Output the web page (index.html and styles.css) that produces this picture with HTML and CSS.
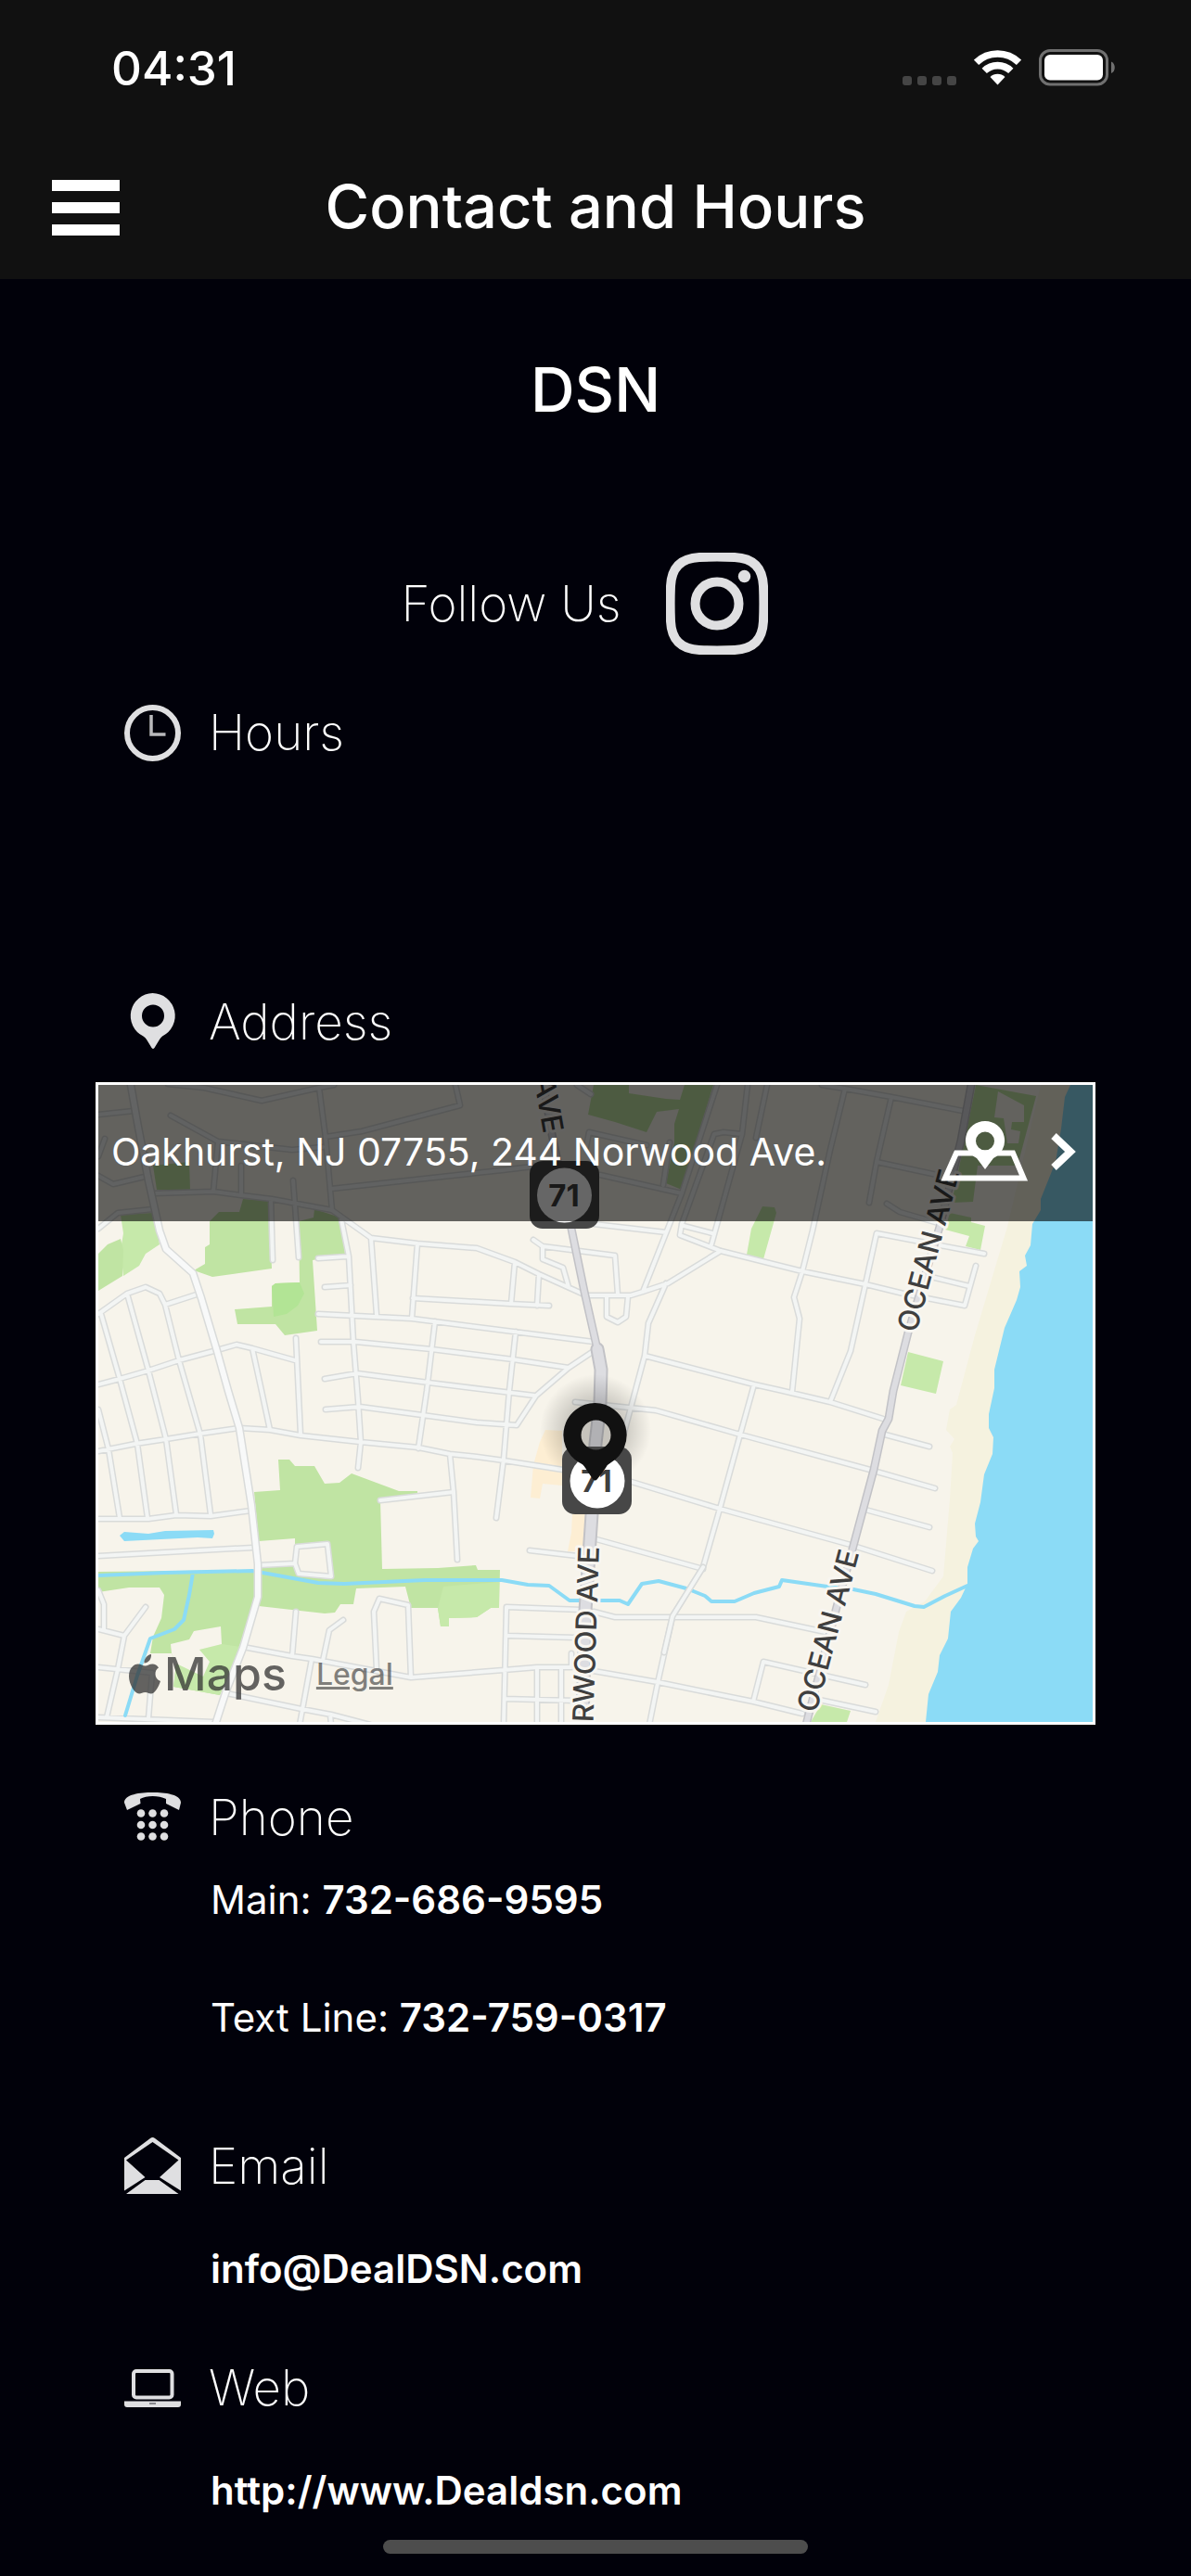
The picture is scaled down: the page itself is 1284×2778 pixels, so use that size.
FILE: index.html
```html
<!DOCTYPE html>
<html lang="en">
<head>
<meta charset="utf-8">
<meta name="viewport" content="width=device-width, initial-scale=1">
<title>Contact and Hours</title>
<link rel="stylesheet" href="styles.css">
</head>
<body>
<header class="top">
  <div class="status">
    <time class="status-time">04:31</time>
    <div class="status-icons">
      <svg width="58" height="38" viewBox="0 0 58 38" fill="#454545" aria-hidden="true">
        <rect x="0" y="28" width="10" height="10" rx="3"/><rect x="16" y="28" width="10" height="10" rx="3"/><rect x="32" y="28" width="10" height="10" rx="3"/><rect x="48" y="28" width="10" height="10" rx="3"/>
      </svg>
      <svg width="51" height="38" viewBox="0 0 51 38" aria-hidden="true">
        <g fill="none" stroke="#fff" stroke-width="7.6"><path d="M2.5 13.4A33 33 0 0 1 48.5 13.4"/><path d="M11.2 22.4A20.5 20.5 0 0 1 39.8 22.4"/></g>
        <path d="M25.5 37.500L17.500 29A11.500 11.500 0 0 1 33.500 29Z" fill="#fff"/>
      </svg>
      <svg width="82" height="40" viewBox="0 0 82 40" aria-hidden="true">
        <rect x="1.500" y="1.500" width="72" height="36.500" rx="10.500" fill="none" stroke="#707070" stroke-width="3"/>
        <rect x="6" y="6" width="63" height="27.500" rx="6" fill="#fff"/>
        <path d="M78 13.500C83 15 83 24.500 78 26Z" fill="#707070"/>
      </svg>
    </div>
  </div>
  <div class="titlebar">
    <button class="menu" type="button" aria-label="Menu"><span></span><span></span><span></span></button>
    <h1 class="title">Contact and Hours</h1>
  </div>
</header>

<main class="page">
  <h2 class="name">DSN</h2>
  <div class="follow">
    <span class="thin">Follow Us</span>
    <a href="#instagram" class="insta" aria-label="Instagram">
      <svg width="110" height="110" viewBox="0 0 110 110" fill="none" stroke="#dfdfe1" stroke-width="10">
        <path d="M36 5C48 4.500 62 4.500 74 5C94 6 104 16 105 36C105.500 48 105.500 62 105 74C104 94 94 104 74 105C62 105.500 48 105.500 36 105C16 104 6 94 5 74C4.500 62 4.500 48 5 36C6 16 16 6 36 5Z"/>
        <circle cx="55" cy="55" r="23.500"/><circle cx="84.500" cy="25.500" r="6.700" fill="#dfdfe1" stroke="none"/>
      </svg>
    </a>
  </div>

  <section class="block hours">
    <div class="head">
      <svg class="icon" viewBox="0 0 64 64" fill="none" aria-hidden="true"><circle cx="31.500" cy="33.500" r="27.500" stroke="#dfdfe1" stroke-width="6"/><path d="M30 14V35H45.500" stroke="#b9b9bc" stroke-width="3.500"/></svg>
      <h3 class="thin">Hours</h3>
    </div>
  </section>

  <section class="block address">
    <div class="head">
      <svg class="icon" viewBox="0 0 64 64" fill="#dfdfe1" aria-hidden="true"><path fill-rule="evenodd" d="M31.500 2A24.500 24.500 0 0 1 42 48.500Q40 50 39 52L33.500 61Q32 63 30.500 61L25 52Q24 50 21.500 48.500A24.500 24.500 0 0 1 31.500 2ZM32 14.500A12 12 0 1 0 32 38.500A12 12 0 1 0 32 14.500Z"/></svg>
      <h3 class="thin">Address</h3>
    </div>
    <div class="map">
      <svg class="map-art" viewBox="0 0 1072 687" role="img" aria-label="Map of Norwood Avenue, Oakhurst">
        <defs>
          <radialGradient id="shade"><stop offset="0.450" stop-color="#000" stop-opacity=".2"/><stop offset="1" stop-color="#000" stop-opacity="0"/></radialGradient>
          <path id="minor" d="M0 32L38 28M75-1L114 3L176 17L238 3L254 0M238 3L245 57L252 135L294 165L344 171L408 176L449 191L475 204L526 227
          M245 56L284 50L390 22L385 0M78 33L129 61L209 70L242 67M129 61L124 115M154 87V118M59 117L124 115L154 119L187 123L252 135M186 123L188 189M210 103L212 130L216 186
          M251 112L435 92L493 85M7 58L0 77M0 98L16 107L54 98M0 155L21 138L59 134M262 145L270 185L275 277L280 340L283 385L280 413M237 187L268 185M244 218L272 216
          M237 247L338 252L534 277M294 165L300 248M344 171L338 252M339 230L444 236L486 238M449 191L445 236M475 204L473 238M240 277H277L359 285L447 296L507 305
          M244 317L279 311L356 321L470 335M363 255L354 330L345 392M450 266L443 330L437 403L429 467M534 287L507 305L472 335L451 367L408 364L349 356L282 347L245 350
          M0 247L31 225L51 218L66 225L72 237L109 225M0 323L23 317L54 308L87 297L128 286L149 280L166 284L212 297M0 350L11 393L23 467M3 247L23 317L42 387L53 467
          M31 225L54 308L73 382L84 463M72 237L87 297L110 377L121 463M166 284L176 330L185 372M213 273L218 377
          M0 395L40 387L73 382L110 376L152 370L185 372L218 378L282 385L345 391L379 398L408 401L437 405L520 418M0 468H54L84 464L121 465L165 459M0 508L54 505L166 499
          M173 518L212 516L214 498L247 495L251 530L216 527L212 516M304 448L383 439M379 398L383 439L387 512M465 502L525 509
          M0 545L6 560V587M0 587L28 594L21 630L9 682M51 563L28 594M0 628L58 634L54 683M0 682L124 687M156 606L209 616L230 619L337 639L437 631L473 628H510V613
          M213 568L209 616M264 577L249 588L242 621M300 630L297 568L303 554L334 561L337 639M138 656L219 673L251 679L293 690M230 619L217 690M250 679L251 690
          M521 566L440 563L437 690M442 594L514 596M438 662L514 664M473 628V690M499 628V690
          M534 150L612 159M469 167L479 174L557 184L560 226M479 174V188L501 197L507 218M524 227H574L587 223L614 214L671 179M548 228V250L560 256L569 250L571 228
          M587 223L629 117L667 0M541 97L629 117M526 67L529 51L591 65M616 62L609 108M516 0L531 10M629 150L664 53L674 51L694 53L700 0M721 0L709 57M694 53L661 172
          M631 152L662 160M629 150L627 162L671 179L759 201L827 215L868 225L934 238L946 195M612 214L593 257L589 292L566 378M589 292L707 323L734 329L789 342L846 360
          M514 342L572 348L601 351L692 377L832 415L902 435M707 323L692 377L670 457L652 520L619 573L603 645L594 690M565 425L670 457L811 496L899 524M537 490L652 522
          M534 568L557 574H709L784 590M534 632L603 644L706 665L759 678M706 665L717 622L827 647M777 663L838 676M848 377L896 390M827 458L896 477
          M780 0L805 4L855 13L932 28M805 4L789 70L770 157L759 201L750 229L756 252L748 331M855 13L839 83L831 127M839 83L909 98M850 128L864 137L909 150
          M827 215L839 160L955 182M827 215L811 287L789 342M902 208L939 217"/>
          <path id="avenue" d="M35 0L42 40L54 103L66 157L73 177L102 203L111 230L128 287L140 330L152 370L165 453L172 517V552L156 607L138 653L126 690"/>
        </defs>
        <rect width="1072" height="687" fill="#f7f4eb"/>
        <path fill="#f5f2df" d="M1016 0L980 153L945 270L925 345L918 350L914 372L923 382L918 390L921 397L918 447L911 530L891 557L871 568L863 590L852 647L838 687H1072V0Z"/>
        <path fill="#8bdbf6" d="M1048 0L1042 13L1038 47L1032 83L1016 123V135L1007 150L1005 173L999 184L1001 195L993 201L994 218L990 232L977 262L966 307V327L960 355V370L965 380L964 398L955 420L951 450L945 473L946 487L949 492L943 500L937 520V538L930 553L919 568L916 597L907 615L905 633L895 657L892 687H1072V0Z"/>
        <g fill="#c0e4a3">
          <path d="M59 87L98 83L99 113L63 113ZM156 123L184 125L187 198L123 207L103 200L115 193V175L120 172V147L130 137H152Z"/>
          <path d="M233 134L261 143L266 182L231 189L236 265L201 270L191 258H150L147 242L187 239V217L191 214L217 213L216 147L232 143Z"/>
          <path d="M194 404H206L212 411H233L244 430L260 429L273 419L324 438H344V445L304 448L306 522L366 521L407 518L409 523H433L432 564H423L408 574L378 575V584H369L366 564H337L331 541L278 543L275 560H261L255 569L244 570L173 562L172 517L212 516V489L173 492L168 439L196 437Z"/>
          <path d="M0 525L172 523V555L131 658L81 649L84 624L79 613H56L59 595L68 575L71 550L66 542H33L0 547Z"/>
          <path d="M534 0H572V9L612 15L627 16L632 0H663L629 113L612 106L621 62V42L626 26L602 29L591 51L557 40L528 32ZM946 0L1011 12L991 87H948L943 126L920 127L934 60Z"/>
        </g>
        <g fill="#c6e9aa">
          <path d="M24 140L60 138L66 172L51 182L44 195L27 206L24 178L27 160Z"/>
          <path d="M372 541L432 536L432 564H423L408 574L378 575V584H369L366 564ZM109 609L133 603L154 606L131 658L81 649L84 624L115 622Z"/>
          <path d="M716 131L729 132L731 138L717 188L699 183L704 155ZM918 138L941 143V148L956 152L951 178L935 174L939 163L913 156ZM873 288L911 298L903 333L865 324ZM779 668L811 675L807 687H768Z"/>
        </g>
        <path fill="#c0e4a3" d="M24 166L27 178L26 206L0 222V182L10 172Z"/>
        <path fill="#b2e495" d="M187 217L191 214L217 213L222 225L215 238L203 247L189 250Z"/>
        <path fill="#f7f4eb" d="M78 603L98 598L103 589L132 584L133 603L109 609L120 622L113 638L84 624L79 613ZM214 498L247 495L251 530L216 527ZM970 7L998 22V40H985L984 48L994 50L992 63H980L976 36L966 35Z"/>
        <path fill="#fdeed3" d="M482 372L500 373V432L479 430L476 446L466 445L469 410L476 385ZM511 463H526L522 503H506L510 483Z"/>
        <path fill="#8bdbf6" d="M23 486L28 482L54 484L72 481L124 480L125 484L123 489L107 488L28 492Z"/>
        <g fill="none" stroke-linecap="round" stroke-linejoin="round">
          <use href="#minor" stroke="#d9dbda" stroke-width="7"/>
          <use href="#minor" stroke="#f3f5f4" stroke-width="4"/>
          <path stroke="#8bdbf6" stroke-width="4" d="M0 529L72 526L166 524L177 526L237 537L265 538L352 534H435L463 539L486 540L508 556H562L571 560L586 538L604 535L634 543L654 551L661 557H686L707 548L734 541L737 534L786 541L814 544L838 549L880 562L890 563L913 551L937 540M102 526L98 550L92 577L82 587L56 597L42 637L29 680"/>
          <path stroke="#d9dbda" stroke-width="7" d="M652 520L619 573L610 612"/>
          <path stroke="#f3f5f4" stroke-width="4" d="M652 520L619 573L610 612"/>
          <use href="#avenue" stroke="#d9dbda" stroke-width="9"/>
          <use href="#avenue" stroke="#f8f9f9" stroke-width="6"/>
          <g stroke="#c2c2c6" stroke-width="9"><path d="M480 0L489 53L510 155L524 223L538 285"/><path d="M941 0L930 60L907 153L873 267L857 330L852 360L845 373L836 415L814 497L796 563L763 690"/><path stroke-width="15" d="M538 285L542 307L541 343L536 387L532 463L529 507L525 567L522 690"/></g>
          <g stroke="#dddde1" stroke-width="6"><path d="M480 0L489 53L510 155L524 223L538 285"/><path d="M941 0L930 60L907 153L873 267L857 330L852 360L845 373L836 415L814 497L796 563L763 690"/><path stroke-width="11" d="M538 285L542 307L541 343L536 387L532 463L529 507L525 567L522 690"/></g>
        </g>
        <g class="street">
          <text transform="translate(480 53) rotate(80)" text-anchor="end">AVE</text>
          <text transform="translate(540 498) rotate(-88)" text-anchor="end">RWOOD AVE</text>
          <text transform="translate(882 268) rotate(-75)">OCEAN AVE</text>
          <text transform="translate(774 678) rotate(-75)">OCEAN AVE</text>
        </g>
        <circle cx="536" cy="372" r="60" fill="url(#shade)"/>
        <g fill="#474747"><rect x="465" y="82" width="75" height="73" rx="14"/><rect x="500" y="390" width="75" height="73" rx="14"/></g>
        <g fill="#fff"><circle cx="502.500" cy="119" r="29.500"/><circle cx="538" cy="427" r="29.500"/></g>
        <g class="route"><text x="502" y="131">71</text><text x="537" y="439">71</text></g>
        <path fill="#111" fill-rule="evenodd" d="M535.500 343A34.500 34.500 0 0 1 553 407Q549 409 547 413L538 425Q535.500 428 533 425L525 413Q523 409 518 407A34.500 34.500 0 0 1 535.500 343ZM536.500 361.500A16 16 0 1 0 536.500 393.500A16 16 0 1 0 536.500 361.500Z"/>
      </svg>
      <a class="place" href="#directions">
        <span class="place-text">Oakhurst, NJ 07755, 244 Norwood Ave.</span>
        <svg width="95" height="65" viewBox="0 0 95 65" aria-hidden="true"><path fill="none" stroke="#fff" stroke-width="6" d="M17 34.500H78L89.500 61.500H5Z"/><path fill="#fff" fill-rule="evenodd" d="M48 0A21 21 0 0 1 57 40L48 52L39 40A21 21 0 0 1 48 0ZM48 11.500A10 10 0 1 0 48 31.500A10 10 0 1 0 48 11.500Z"/></svg>
        <svg width="28" height="42" viewBox="0 0 28 42" fill="none" stroke="#fff" stroke-width="8" aria-hidden="true"><path d="M3 4L21 21L3 38"/></svg>
      </a>
      <div class="credit">
        <svg width="34" height="43" viewBox="0 0 34 43" aria-hidden="true"><path d="M24 0C24.500 5 21 9.500 16.500 9.500C16 5 20 .5 24 0ZM32 14.500C27 17.500 27 26 34 29C32 35 28 42.500 24 42.500C21 42.500 20.500 41 17.500 41S13.500 42.500 11 42.500C6 42.500 0 32 0 24C0 15 5 10.500 10 10.500C13 10.500 15 12.500 17.500 12.500C20 12.500 22 10.500 25.500 10.500C28 10.500 30.500 12 32 14.500Z"/></svg>
        <span class="credit-name">Maps</span>
        <a class="legal" href="#legal">Legal</a>
      </div>
    </div>
  </section>

  <section class="block phone">
    <div class="head">
      <svg class="icon" viewBox="0 0 64 64" fill="#dfdfe1" aria-hidden="true"><path d="M1 17C1 8 18 6 31.500 6S62 8 62 17L60 25L46 18V13C38 9 25 9 18 13L18.500 18L4 25Z"/><circle cx="19" cy="28.500" r="4.300"/><circle cx="31.500" cy="28.500" r="4.300"/><circle cx="44" cy="28.500" r="4.300"/><circle cx="19" cy="41" r="4.300"/><circle cx="31.500" cy="41" r="4.300"/><circle cx="44" cy="41" r="4.300"/><circle cx="19" cy="53.500" r="4.300"/><circle cx="31.500" cy="53.500" r="4.300"/><circle cx="44" cy="53.500" r="4.300"/></svg>
      <h3 class="thin">Phone</h3>
    </div>
    <p class="line">Main: <a href="tel:732-686-9595">732-686-9595</a></p>
    <p class="line">Text Line: <a href="tel:732-759-0317">732-759-0317</a></p>
  </section>

  <section class="block email">
    <div class="head">
      <svg class="icon" viewBox="0 0 64 64" fill="#dfdfe1" aria-hidden="true"><path d="M29 3Q31.500 1 34 3L62 24V59.500L39 45L59.500 26.500L31.500 7L3 26.500L23.500 45L1 59.500V24ZM23.500 48H38.500L59.500 63H3Z"/></svg>
      <h3 class="thin">Email</h3>
    </div>
    <p class="line"><a href="mailto:info@DealDSN.com">info@DealDSN.com</a></p>
  </section>

  <section class="block web">
    <div class="head">
      <svg class="icon" viewBox="0 0 64 64" aria-hidden="true"><rect x="11" y="15" width="41.500" height="28.500" rx="3" fill="none" stroke="#dfdfe1" stroke-width="4"/><path fill="#dfdfe1" d="M1 47.500H62V51Q62 54 59 54H4Q1 54 1 51Z"/><path stroke="#88888c" stroke-width="2" d="M28 50H35"/></svg>
      <h3 class="thin">Web</h3>
    </div>
    <p class="line"><a href="http://www.Dealdsn.com">http://www.Dealdsn.com</a></p>
  </section>
</main>
<div class="home-bar"></div>
</body>
</html>
```
FILE: styles.css
```css
* { box-sizing: border-box; }

body {
  margin: 0;
  background: #01010a;
  color: #fff;
  font-family: Inter, "Liberation Sans", sans-serif;
}

h1, h2, h3, p { margin: 0; }
a { color: inherit; text-decoration: none; }
svg { display: block; }

/* Header */
.top { background: #111; }

.status {
  display: flex;
  align-items: center;
  justify-content: space-between;
  height: 146px;
  padding: 0 82px 0 120px;
}

.status-time { font-size: 51px; font-weight: 500; }

.status-icons { display: flex; align-items: center; gap: 19px; }

.titlebar {
  display: grid;
  grid-template-columns: 1fr auto 1fr;
  align-items: center;
  height: 155px;
  padding: 0 56px;
}

.menu {
  display: flex;
  flex-direction: column;
  gap: 12px;
  width: 73px;
  padding: 0;
  border: 0;
  background: none;
}

.menu span { width: 100%; height: 12px; background: #fff; }

.title, .name { font-weight: 500; line-height: 80px; }
.title { padding-bottom: 2px; font-size: 65px; }

/* Page body */
.page { padding: 79px 103px 0; }

.name { font-size: 66px; text-align: center; }

.follow {
  display: flex;
  align-items: center;
  justify-content: center;
  gap: 48px;
  margin-top: 136px;
  padding-right: 24px;
}

.thin { font-size: 53px; font-weight: 200; line-height: 64px; }

.head { display: flex; align-items: center; gap: 28px; padding-left: 30px; }
.head .thin { padding-top: 2px; }

.icon { width: 64px; height: 64px; flex: none; margin: 0; }

.hours { margin-top: 50px; }
.address { margin-top: 246px; }
.phone { margin-top: 66px; }
.email { margin-top: 96px; }
.web { margin-top: 64px; }

.line { padding-left: 124px; font-size: 42px; line-height: 60px; }
.line a { font-weight: 600; }
.head + .line { margin-top: 49px; }
.phone .head + .line { margin-top: 27px; }
.line + .line { margin-top: 67px; }

/* Map */
.map {
  position: relative;
  margin-top: 33px;
  border: 3px solid #fff;
  overflow: hidden;
}

.map-art { width: 100%; height: auto; }

.street {
  fill: #3f3f3f;
  stroke: #f8f6f1;
  stroke-width: 6px;
  stroke-linejoin: round;
  paint-order: stroke;
  font-size: 31px;
  font-weight: 500;
}

.route { fill: #3f3f3f; font-size: 33px; font-weight: 700; text-anchor: middle; }

.place {
  position: absolute;
  inset: 0 0 auto;
  display: flex;
  align-items: center;
  gap: 24px;
  height: 147px;
  padding: 0 17px 4px 14px;
  background: rgba(0, 0, 0, .6);
}

.place-text { flex: 1; font-size: 41px; white-space: nowrap; }

.credit {
  position: absolute;
  left: 33px;
  bottom: 22px;
  display: flex;
  align-items: center;
  color: rgba(50, 50, 50, .75);
  fill: currentColor;
}

.credit-name { margin-left: 4px; font-size: 50px; font-weight: 500; }

.legal { margin-left: 32px; font-size: 32px; font-weight: 500; text-decoration: underline; opacity: .8; }

/* Home indicator */
.home-bar {
  width: 458px;
  height: 15px;
  margin: 23px auto 24px;
  border-radius: 8px;
  background: #4d4d4d;
}
```
